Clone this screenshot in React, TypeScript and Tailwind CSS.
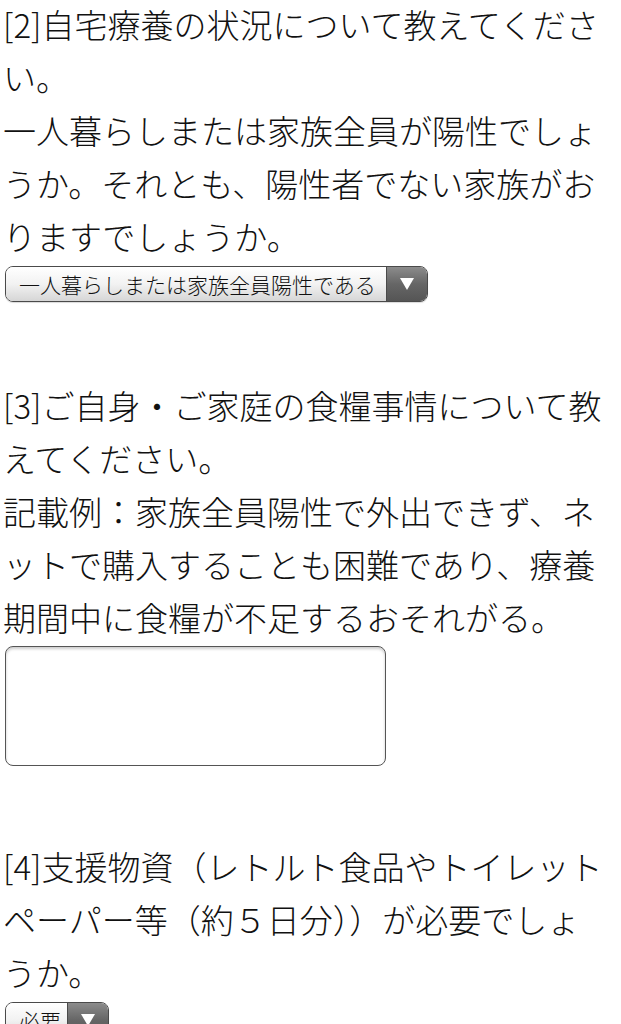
import React from 'react';

const font = { fontFamily: '"Noto Sans CJK JP", "Noto Sans", sans-serif' };

const FakeSelect: React.FC<{ label: string; width: string }> = ({ label, width }) => (
  <div
    className={`flex h-[36px] ${width} overflow-hidden rounded-[8px] border border-[#4a4a4a] shadow-[0_1px_1px_rgba(0,0,0,0.15)]`}
  >
    <div className="flex flex-1 items-center bg-gradient-to-b from-white via-[#f2f2f2] to-[#d6d6d6] pl-[13px] text-[21px] leading-none text-[#111] whitespace-nowrap">
      {label}
    </div>
    <div className="flex w-[41px] items-center justify-center border-l border-[#4a4a4a] bg-gradient-to-b from-[#8c8c8c] via-[#666] to-[#555]">
      <svg width="14" height="12" viewBox="0 0 14 12">
        <path d="M0 0 H14 L7 12 Z" fill="#fff" />
      </svg>
    </div>
  </div>
);

export default function App() {
  return (
    <div className="min-h-screen bg-white pl-[3px] text-[33px] font-light leading-[53px] text-[#111]" style={font}>
      <section className="-mt-[2px]">
        <p className="whitespace-nowrap">
          [2]自宅療養の状況について教えてくださ
          <br />
          い。
          <br />
          一人暮らしまたは家族全員が陽性でしょ
          <br />
          うか。それとも、陽性者でない家族がお
          <br />
          りますでしょうか。
        </p>
        <div className="mt-[3px] pl-[2px]">
          <FakeSelect label="一人暮らしまたは家族全員陽性である" width="w-[423px]" />
        </div>
      </section>

      <section className="mt-[77px]">
        <p className="whitespace-nowrap">
          [3]ご自身・ご家庭の食糧事情について教
          <br />
          えてください。
          <br />
          記載例：家族全員陽性で外出できず、ネ
          <br />
          ットで購入することも困難であり、療養
          <br />
          期間中に食糧が不足するおそれがる。
        </p>
        <div className="mt-[2px] pl-[2px]">
          <div className="h-[120px] w-[381px] rounded-[8px] border-[1.5px] border-[#555] bg-white shadow-[inset_0_2px_3px_rgba(0,0,0,0.2)]" />
        </div>
      </section>

      <section className="mt-[74px]">
        <p className="whitespace-nowrap">
          [4]支援物資（レトルト食品やトイレット
          <br />
          ペーパー等（約５日分））が必要でしょ
          <br />
          うか。
        </p>
        <div className="mt-[3px] pl-[2px]">
          <FakeSelect label="必要" width="w-[104px]" />
        </div>
      </section>
    </div>
  );
}
